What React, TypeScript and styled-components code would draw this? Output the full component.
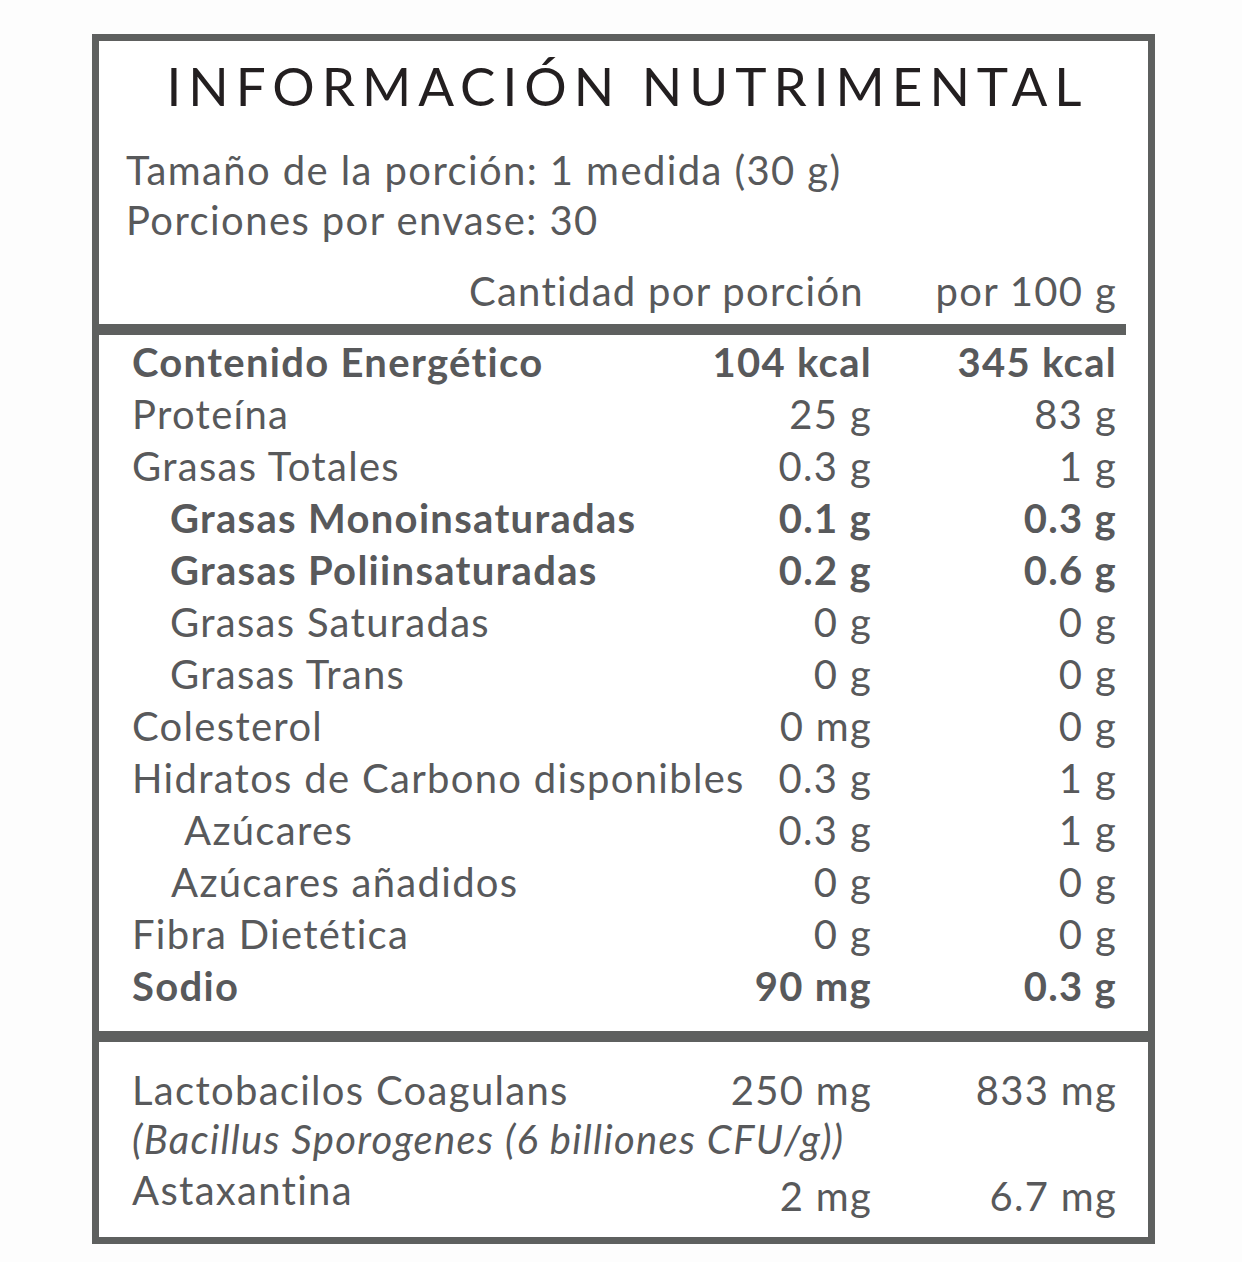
import React from "react";
import styled, { createGlobalStyle } from "styled-components";

const Global = createGlobalStyle`
  html, body { margin: 0; padding: 0; background: #fdfdfd; }
  body { font-family: "Lato", "Open Sans", sans-serif; }
`;

const INK = "#58595b";
const RULE = "#5e605f";

const Page = styled.div`
  width: 1242px;
  height: 1262px;
  box-sizing: border-box;
  padding: 34px 0 0 92px;
  background: #fdfdfd;
`;

const Label = styled.section`
  width: 1063px;
  height: 1210px;
  box-sizing: border-box;
  border: 7px solid ${RULE};
  display: flex;
  flex-direction: column;
  background: #fff;
`;

const Title = styled.h1`
  margin: 0;
  padding: 14px 0 0 8px;
  text-align: center;
  font-family: "Lato", sans-serif;
  font-weight: 400;
  font-size: 53px;
  line-height: 62px;
  letter-spacing: 7px;
  color: #231f20;
`;

const Serving = styled.div`
  padding: 28px 0 0 27px;
  display: flex;
  flex-direction: column;
  font-size: 40px;
  line-height: 50px;
  letter-spacing: 1.4px;
  color: ${INK};
`;

const Grid = styled.div`
  display: grid;
  grid-template-columns: 1fr 120px 245px;
  padding: 0 31px 0 33px;
  color: ${INK};
  font-size: 40px;
  letter-spacing: 1.3px;
`;

const ColHeader = styled(Grid)`
  padding-top: 17px;
  padding-bottom: 4px;
  height: 58px;
  line-height: 58px;
`;

const HeadCell = styled.div<{ $span?: boolean }>`
  grid-column: ${(p) => (p.$span ? "1 / 3" : "auto")};
  margin-right: ${(p) => (p.$span ? "8px" : "0")};
  justify-self: end;
  white-space: nowrap;
`;

const Rule = styled.div<{ $short?: boolean }>`
  height: 11px;
  flex: none;
  background: ${RULE};
  margin-right: ${(p) => (p.$short ? "22px" : "0")};
`;

const Rows = styled.div`
  padding: 1px 0 19px;
`;

const Row = styled(Grid)<{ $bold?: boolean; $tall?: boolean }>`
  height: ${(p) => (p.$tall ? 68 : 52)}px;
  line-height: ${(p) => (p.$tall ? 68 : 52)}px;
  font-weight: ${(p) => (p.$bold ? 700 : 400)};
`;

const Name = styled.div<{ $indent?: number }>`
  padding-left: ${(p) => p.$indent ?? 0}px;
  white-space: nowrap;
`;

const Value = styled.div`
  justify-self: end;
  white-space: nowrap;
`;

const Extra = styled.div`
  padding-top: 22px;
`;

const Note = styled.div`
  padding: 0 0 0 33px;
  font-style: italic;
  font-size: 40px;
  letter-spacing: 1.3px;
  line-height: 46px;
  color: ${INK};
  white-space: nowrap;
`;

const RaisedName = styled(Name)`
  line-height: 56px;
  align-self: start;
`;

type R = { name: string; a: string; b: string; bold?: boolean; indent?: number };

const rows: R[] = [
  { name: "Contenido Energético", a: "104 kcal", b: "345 kcal", bold: true },
  { name: "Proteína", a: "25 g", b: "83 g" },
  { name: "Grasas Totales", a: "0.3 g", b: "1 g" },
  { name: "Grasas Monoinsaturadas", a: "0.1 g", b: "0.3 g", bold: true, indent: 38 },
  { name: "Grasas Poliinsaturadas", a: "0.2 g", b: "0.6 g", bold: true, indent: 38 },
  { name: "Grasas Saturadas", a: "0 g", b: "0 g", indent: 38 },
  { name: "Grasas Trans", a: "0 g", b: "0 g", indent: 38 },
  { name: "Colesterol", a: "0 mg", b: "0 g" },
  { name: "Hidratos de Carbono disponibles", a: "0.3 g", b: "1 g" },
  { name: "Azúcares", a: "0.3 g", b: "1 g", indent: 52 },
  { name: "Azúcares añadidos", a: "0 g", b: "0 g", indent: 39 },
  { name: "Fibra Dietética", a: "0 g", b: "0 g" },
  { name: "Sodio", a: "90 mg", b: "0.3 g", bold: true },
];

export default function App() {
  return (
    <Page>
      <Global />
      <Label>
        <Title>INFORMACIÓN NUTRIMENTAL</Title>
        <Serving>
          <span>Tamaño de la porción: 1 medida (30 g)</span>
          <span>Porciones por envase: 30</span>
        </Serving>
        <ColHeader>
          <HeadCell $span>Cantidad por porción</HeadCell>
          <HeadCell>por 100 g</HeadCell>
        </ColHeader>
        <Rule $short />
        <Rows>
          {rows.map((r) => (
            <Row key={r.name} $bold={r.bold}>
              <Name $indent={r.indent}>{r.name}</Name>
              <Value>{r.a}</Value>
              <Value>{r.b}</Value>
            </Row>
          ))}
        </Rows>
        <Rule />
        <Extra>
          <Row>
            <Name>Lactobacilos Coagulans</Name>
            <Value>250 mg</Value>
            <Value>833 mg</Value>
          </Row>
          <Note>(Bacillus Sporogenes (6 billiones CFU/g))</Note>
          <Row $tall>
            <RaisedName>Astaxantina</RaisedName>
            <Value>2 mg</Value>
            <Value>6.7 mg</Value>
          </Row>
        </Extra>
      </Label>
    </Page>
  );
}
